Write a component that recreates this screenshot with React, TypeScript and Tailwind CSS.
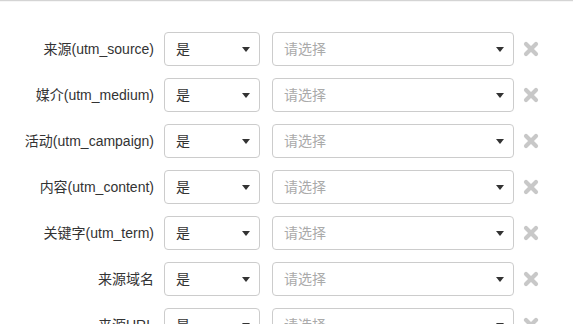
import React from 'react'

const rows = [
  '来源(utm_source)',
  '媒介(utm_medium)',
  '活动(utm_campaign)',
  '内容(utm_content)',
  '关键字(utm_term)',
  '来源域名',
  '来源URL',
]

function Caret() {
  return (
    <svg className="h-[5px] w-[8px]" viewBox="0 0 8 5">
      <path d="M0 0h8L4 5z" fill="#333" />
    </svg>
  )
}

function Remove() {
  return (
    <svg className="h-[16px] w-[16px]" viewBox="0 0 16 16">
      <path
        d="M3 3l10 10M13 3L3 13"
        stroke="#c8c8c8"
        strokeWidth={4.2}
        strokeLinecap="round"
      />
    </svg>
  )
}

function FilterRow({ label }: { label: string }) {
  return (
    <div className="flex h-[34px] items-center">
      <div className="w-[154px] shrink-0 text-right text-[14px] text-[#333]">{label}</div>
      <div className="ml-[10px] flex h-[34px] w-[96px] shrink-0 items-center justify-between rounded-[4px] border border-[#ccc] bg-white pl-[11px] pr-[9px] text-[14px] text-[#333]">
        <span>是</span>
        <Caret />
      </div>
      <div className="ml-[12px] flex h-[34px] w-[242px] shrink-0 items-center justify-between rounded-[4px] border border-[#ccc] bg-white pl-[11px] pr-[9px] text-[14px] text-[#aaa]">
        <span>请选择</span>
        <Caret />
      </div>
      <div className="ml-[9px] flex items-center">
        <Remove />
      </div>
    </div>
  )
}

export default function App() {
  return (
    <div
      className="h-[324px] w-[573px] overflow-hidden bg-white"
      style={{ fontFamily: '"Liberation Sans", Arial, "Noto Sans CJK SC", sans-serif' }}
    >
      <div className="h-[2px] border-t border-[#d4d4d4] bg-[#f6f6f6]" />
      <div className="flex flex-col gap-[12px] pt-[30px]">
        {rows.map((r) => (
          <FilterRow key={r} label={r} />
        ))}
      </div>
    </div>
  )
}
